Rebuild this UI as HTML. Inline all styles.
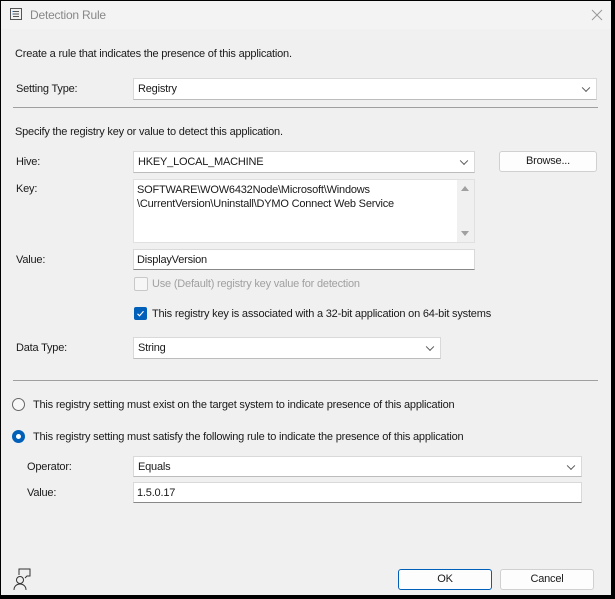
<!DOCTYPE html>
<html><head><style>
body{margin:0;width:615px;height:599px;background:#000;position:relative;overflow:hidden;font-family:"Liberation Sans",sans-serif;font-size:11px;letter-spacing:-0.2px;color:#1a1a1a}
.win{position:absolute;left:1px;top:1px;width:610px;height:594px;background:#f0f0f0}
.t{position:absolute;white-space:nowrap;line-height:14px}
.box{position:absolute;background:#fff;border:1px solid #d9d9d9;box-sizing:border-box}
.combo{border-bottom-color:#bcbcbc}
.chev{position:absolute;right:7px;top:50%;width:5px;height:5px;border-right:1px solid #555;border-bottom:1px solid #555;transform:translateY(-70%) rotate(45deg)}
.btn{position:absolute;background:#fdfdfd;border:1px solid #d0d0d0;border-radius:3px;box-sizing:border-box;text-align:center;line-height:18px}
.sep{position:absolute;height:1px;background:#a0a0a0}
</style></head><body>
<div class="win">
<div style="position:absolute;left:0;top:0;width:610px;height:28px;background:#f3f3f3"></div>
<svg style="position:absolute;left:8px;top:6px" width="14" height="14" viewBox="0 0 14 14"><rect x="1.5" y="1.5" width="11" height="11" fill="none" stroke="#555"/><path d="M4 4.5h6M4 7h6M4 9.5h6" stroke="#555"/><path d="M3 4.5h.5M3 7h.5" stroke="#2a7ad5"/></svg>
<div class="t" style="left:29px;top:7px;color:#888;font-size:12px">Detection Rule</div>
<svg style="position:absolute;left:590px;top:8px" width="12" height="12"><path d="M1 1l10 10M11 1L1 11" stroke="#999" stroke-width="1"/></svg>

<div class="t" style="left:14px;top:46px">Create a rule that indicates the presence of this application.</div>
<div class="t" style="left:15px;top:81px">Setting Type:</div>
<div class="box combo" style="left:132px;top:77px;width:464px;height:22px"><div class="t" style="left:4px;top:3px">Registry</div><div class="chev"></div></div>
<div class="sep" style="left:12px;top:106px;width:585px"></div>

<div class="t" style="left:14px;top:124px">Specify the registry key or value to detect this application.</div>
<div class="t" style="left:15px;top:154px">Hive:</div>
<div class="box combo" style="left:132px;top:150px;width:342px;height:22px"><div class="t" style="left:4px;top:3px">HKEY_LOCAL_MACHINE</div><div class="chev"></div></div>
<div class="btn" style="left:498px;top:150px;width:98px;height:21px">Browse...</div>
<div class="t" style="left:15px;top:181px">Key:</div>
<div class="box" style="left:132px;top:178px;width:342px;height:64px;border-color:#e0e0e0">
<div class="t" style="left:3px;top:3px">SOFTWARE\WOW6432Node\Microsoft\Windows<br>\CurrentVersion\Uninstall\DYMO Connect Web Service</div>
<div style="position:absolute;right:0;top:0;width:17px;height:62px;background:#f0f0f0"></div>
<div style="position:absolute;right:5px;top:6px;border:4px solid transparent;border-bottom:5px solid #a0a0a0;border-top:0"></div>
<div style="position:absolute;right:5px;bottom:6px;border:4px solid transparent;border-top:5px solid #a0a0a0;border-bottom:0"></div>
</div>
<div class="t" style="left:15px;top:252px">Value:</div>
<div class="box" style="left:132px;top:248px;width:342px;height:21px;border-bottom-color:#888"><div class="t" style="left:3px;top:3px">DisplayVersion</div></div>
<div style="position:absolute;left:133px;top:276px;width:12px;height:12px;border:1px solid #c8c8c8;border-radius:2px;background:#f6f6f6"></div>
<div class="t" style="left:151px;top:276px;color:#a0a0a0">Use (Default) registry key value for detection</div>
<div style="position:absolute;left:133px;top:306px;width:13px;height:13px;border-radius:2px;background:#005fb8"><svg width="13" height="13"><path d="M3.5 6.8l2 2 4-4.5" stroke="#fff" fill="none" stroke-width="1.1"/></svg></div>
<div class="t" style="left:151px;top:306px">This registry key is associated with a 32-bit application on 64-bit systems</div>
<div class="t" style="left:15px;top:340px">Data Type:</div>
<div class="box combo" style="left:132px;top:336px;width:308px;height:22px"><div class="t" style="left:4px;top:3px">String</div><div class="chev"></div></div>
<div class="sep" style="left:12px;top:379px;width:585px"></div>

<div style="position:absolute;left:11px;top:397px;width:11px;height:11px;border:1px solid #666;border-radius:50%;background:#f8f8f8"></div>
<div class="t" style="left:32px;top:397px">This registry setting must exist on the target system to indicate presence of this application</div>
<div style="position:absolute;left:11px;top:429px;width:13px;height:13px;border-radius:50%;background:#005fb8"><div style="position:absolute;left:4px;top:4px;width:5px;height:5px;border-radius:50%;background:#fff"></div></div>
<div class="t" style="left:32px;top:429px">This registry setting must satisfy the following rule to indicate the presence of this application</div>
<div class="t" style="left:26px;top:459px">Operator:</div>
<div class="box combo" style="left:132px;top:455px;width:449px;height:21px"><div class="t" style="left:4px;top:3px">Equals</div><div class="chev"></div></div>
<div class="t" style="left:26px;top:485px">Value:</div>
<div class="box" style="left:132px;top:481px;width:449px;height:21px;border-bottom-color:#888"><div class="t" style="left:3px;top:3px">1.5.0.17</div></div>

<svg style="position:absolute;left:11px;top:566px" width="22" height="24" viewBox="0 0 22 24"><path d="M7 8V2h11v7h-3l-2 2" fill="none" stroke="#333"/><circle cx="8" cy="13" r="3.5" fill="#f0f0f0" stroke="#333"/><path d="M2 23c0-4 3-6 6-6s6 2 6 6" fill="none" stroke="#333"/></svg>
<div class="btn" style="left:397px;top:568px;width:94px;height:21px;border:1px solid #005fb8">OK</div>
<div class="btn" style="left:499px;top:568px;width:94px;height:21px">Cancel</div>
</div>
</body></html>
